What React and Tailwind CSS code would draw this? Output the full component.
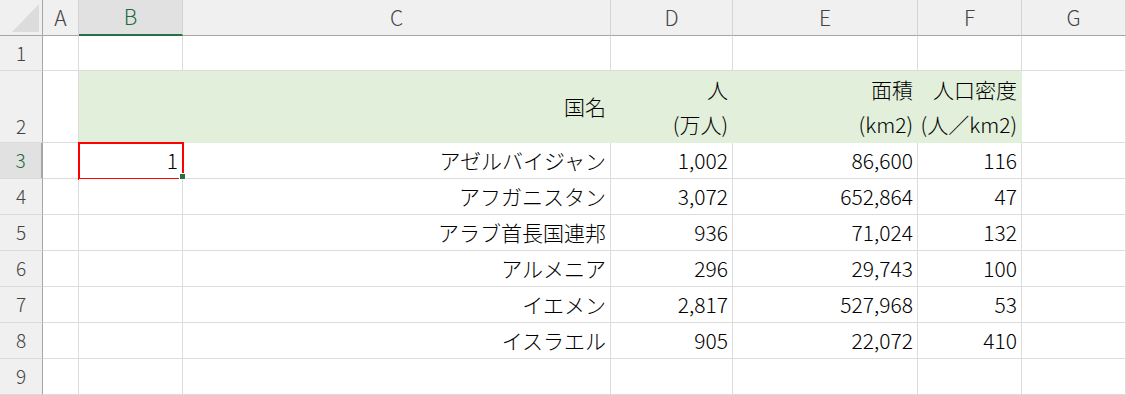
const COLS = ['A', 'B', 'C', 'D', 'E', 'F', 'G'];

const ROWS = [
  { n: 3, b: '1', c: 'アゼルバイジャン', d: '1,002', e: '86,600', f: '116' },
  { n: 4, c: 'アフガニスタン', d: '3,072', e: '652,864', f: '47' },
  { n: 5, c: 'アラブ首長国連邦', d: '936', e: '71,024', f: '132' },
  { n: 6, c: 'アルメニア', d: '296', e: '29,743', f: '100' },
  { n: 7, c: 'イエメン', d: '2,817', e: '527,968', f: '53' },
  { n: 8, c: 'イスラエル', d: '905', e: '22,072', f: '410' },
];

function RowHead({ n, active, bottom }) {
  return (
    <div
      className={`flex justify-center border-r border-b border-r-[#a6a6a6] border-b-[#dadada] text-[19px] ${
        bottom ? 'items-end pb-[2px]' : 'items-center'
      } ${active ? 'bg-[#e1e1e1] text-[#1f6b41] border-r-2 border-r-[#217346]' : 'bg-[#f0f0f0] text-[#444]'}`}
    >
      {n}
    </div>
  );
}

function Cell({ children, green, className = '' }) {
  return (
    <div
      className={`flex items-center justify-end whitespace-nowrap border-r border-b pr-[4px] text-black ${
        green ? 'bg-[#e2efda] border-[#e2efda]' : 'bg-white border-[#dcdcdc]'
      } ${className}`}
    >
      {children}
    </div>
  );
}

function TwoLine({ top, bottom }) {
  return (
    <div className="flex flex-col items-end leading-[35px] pt-[1px]">
      <span>{top}</span>
      <span>{bottom}</span>
    </div>
  );
}

export default function App() {
  return (
    <div
      className="w-[1126px] h-[395px] overflow-hidden bg-white text-[21px] font-light"
      style={{ fontFamily: '"Noto Sans CJK JP", "Noto Sans", sans-serif' }}
    >
      <div className="grid grid-cols-[43px_36px_104px_428px_122px_185px_104px_104px] grid-rows-[36px_35px_72px_repeat(7,36px)]">
        {/* corner */}
        <div className="relative bg-[#f0f0f0] border-r border-b border-[#a6a6a6]">
          <svg className="absolute left-0 top-0" width="42" height="35" viewBox="0 0 42 35">
            <polygon points="12,32 39,32 39,4" fill="#dcdcdc" />
          </svg>
        </div>
        {COLS.map((c) => (
          <div
            key={c}
            className={`flex items-center justify-center border-r border-b border-r-[#d4d4d4] text-[21px] ${
              c === 'B'
                ? 'bg-[#e1e1e1] text-[#1f6b41] border-b-2 border-b-[#217346]'
                : 'bg-[#f0f0f0] text-[#444] border-b-[#a6a6a6]'
            }`}
          >
            {c}
          </div>
        ))}

        {/* row 1 */}
        <RowHead n={1} />
        {COLS.map((c) => (
          <Cell key={c} />
        ))}

        {/* row 2 */}
        <RowHead n={2} bottom />
        <Cell />
        <Cell green />
        <Cell green>国名</Cell>
        <Cell green>
          <TwoLine top="人" bottom="(万人)" />
        </Cell>
        <Cell green>
          <TwoLine top="面積 " bottom="(km2)" />
        </Cell>
        <Cell green>
          <TwoLine top="人口密度" bottom="(人／km2)" />
        </Cell>
        <Cell />

        {ROWS.map((r) => (
          <div key={r.n} className="contents">
            <RowHead n={r.n} active={r.n === 3} />
            <Cell />
            <Cell className="relative">
              {r.b}
              {r.n === 3 && (
                <>
                  <div className="absolute left-[-1px] top-[-1px] w-[106px] h-[38px] border-2 border-[#ff0000]" />
                  <div className="absolute left-[101px] top-[31px] w-[5px] h-[5px] bg-[#217346] outline outline-1 outline-white" />
                </>
              )}
            </Cell>
            <Cell>{r.c}</Cell>
            <Cell>{r.d}</Cell>
            <Cell>{r.e}</Cell>
            <Cell>{r.f}</Cell>
            <Cell />
          </div>
        ))}

        {/* row 9 */}
        <RowHead n={9} />
        {COLS.map((c) => (
          <Cell key={c} />
        ))}
      </div>
    </div>
  );
}
